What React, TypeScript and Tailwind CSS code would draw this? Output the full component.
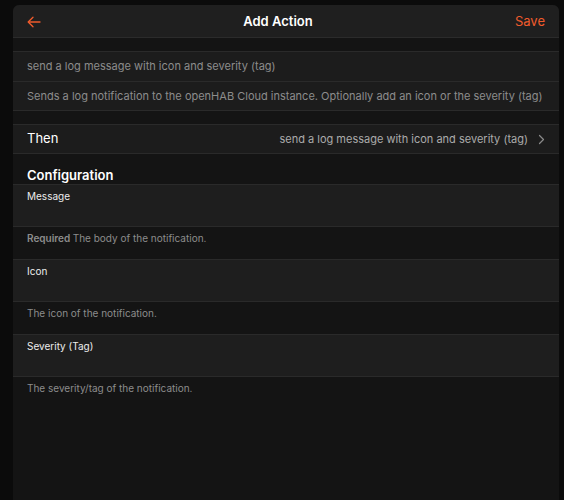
import React from "react";

const font = { fontFamily: "Inter, 'Noto Sans', sans-serif" };

const BackArrow = () => (
  <svg width="14" height="12" viewBox="0 0 14 12" fill="none" stroke="#ef5b2c" strokeWidth="1.3" strokeLinecap="round" strokeLinejoin="round">
    <path d="M13 6H1.5" />
    <path d="M6 1.2L1.2 6L6 10.8" />
  </svg>
);

const Chevron = () => (
  <svg width="7" height="11" viewBox="0 0 7 11" fill="none" stroke="#8a8a8a" strokeWidth="1.2" strokeLinecap="round" strokeLinejoin="round">
    <path d="M1.5 1.5L5.5 5.5L1.5 9.5" />
  </svg>
);

type Param = { label: string; help: string; required?: boolean };

const params: Param[] = [
  { label: "Message", help: "The body of the notification.", required: true },
  { label: "Icon", help: "The icon of the notification." },
  { label: "Severity (Tag)", help: "The severity/tag of the notification." },
];

const App = () => {
  return (
    <div className="flex h-[500px] w-[564px] overflow-hidden bg-[#0b0b0b] pt-[5px] pl-[13px] pr-[5px]" style={font}>
      <div className="flex flex-1 flex-col overflow-hidden rounded-t-[6px] bg-[#141414]">
        {/* navbar */}
        <div className="flex h-[33px] shrink-0 items-center justify-between border-b border-[#2b2b2b] bg-[#1f1f1f] pt-[1px] pl-[14px] pr-[14px]">
          <BackArrow />
          <span className="text-[13px] font-semibold text-white">Add Action</span>
          <span className="text-[13px] text-[#ef5b2c]">Save</span>
        </div>

        <div className="h-[13px] shrink-0" />

        {/* module type */}
        <div className="border-y border-[#2a2a2a] bg-[#1c1c1c]">
          <div className="flex h-[30px] items-center border-b border-[#2a2a2a] pl-[14px] text-[11px] text-[#8c8c8c]">
            send a log message with icon and severity (tag)
          </div>
          <div className="flex h-[28px] items-center overflow-hidden whitespace-nowrap pl-[14px] text-[11px] text-[#8c8c8c]">
            Sends a log notification to the openHAB Cloud instance. Optionally add an icon or the severity (tag)
          </div>
        </div>

        <div className="h-[13px] shrink-0" />

        <div className="flex h-[30px] items-center justify-between border-y border-[#2a2a2a] bg-[#1c1c1c] pl-[14px] pr-[14px]">
          <span className="text-[13px] text-white">Then</span>
          <span className="flex items-center gap-[10px] text-[11px] text-[#ababab]">
            send a log message with icon and severity (tag)
            <Chevron />
          </span>
        </div>

        <div className="h-[30px] shrink-0 pl-[14px] pt-[13px] text-[13px] leading-[16px] font-semibold text-white">
          Configuration
        </div>

        {/* config params */}
        {params.map((p) => (
          <div key={p.label}>
            <div className="h-[43px] border-y border-[#2a2a2a] bg-[#1e1e1e] pl-[14px] pt-[5px] text-[10px] leading-[12px] text-[#ececec]">
              {p.label}
            </div>
            <div className="h-[32px] pl-[14px] pt-[5px] text-[10px] leading-[12px] text-[#8c8c8c]">
              {p.required && <span className="font-semibold">Required </span>}
              {p.help}
            </div>
          </div>
        ))}
      </div>
    </div>
  );
};

export default App;
